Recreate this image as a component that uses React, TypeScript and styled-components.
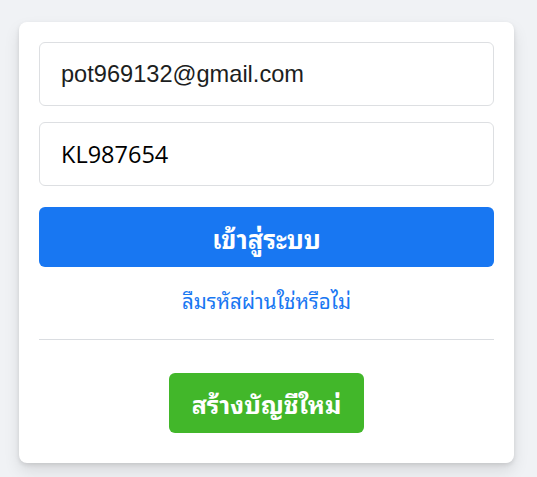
import React from "react";
import styled, { createGlobalStyle } from "styled-components";

const thaiStack =
  '"Leelawadee UI", Leelawadee, Tahoma, "Noto Sans Thai Looped", "Noto Serif Thai", Loma, Garuda, Waree, Sarabun, "Noto Sans", sans-serif';

const Global = createGlobalStyle`
  html, body { margin: 0; padding: 0; background: #f0f2f5; }
  body { font-family: "Liberation Sans", Arial, sans-serif; }
`;

const Page = styled.div`
  padding: 22px 23px 14px 19px;
`;

const Card = styled.form`
  background: #ffffff;
  border-radius: 8px;
  box-shadow: 0 2px 4px rgba(0, 0, 0, 0.1), 0 8px 16px rgba(0, 0, 0, 0.1);
  padding: 20px 20px 30px 20px;
  display: flex;
  flex-direction: column;
`;

const Input = styled.input<{ $font: string; $size: number; $color: string }>`
  box-sizing: border-box;
  height: 64px;
  width: 100%;
  border: 1px solid #dddfe2;
  border-radius: 6px;
  padding: 0 21px;
  font-family: ${(p) => p.$font};
  font-size: ${(p) => p.$size}px;
  color: ${(p) => p.$color};
  outline: none;
  background: #fff;
  & + & { margin-top: 16px; }
`;

const LoginButton = styled.button`
  margin-top: 21px;
  height: 60px;
  padding: 0;
  border: none;
  border-radius: 6px;
  background: #1877f2;
  color: #fff;
  font-family: ${thaiStack};
  font-weight: 700;
  font-size: 25.5px;
  cursor: pointer;
`;

const Forgot = styled.a`
  align-self: center;
  margin-top: 19px;
  color: #1877f2;
  font-family: ${thaiStack};
  font-size: 20.5px;
  line-height: 28px;
  text-decoration: none;
`;

const Divider = styled.div`
  margin-top: 25px;
  border-top: 1px solid #dadde1;
`;

const CreateButton = styled.button`
  align-self: center;
  margin-top: 33px;
  height: 60px;
  padding: 0 23px;
  border: none;
  border-radius: 6px;
  background: #42b72a;
  color: #fff;
  font-family: ${thaiStack};
  font-weight: 700;
  font-size: 25px;
  cursor: pointer;
`;

export default function App() {
  return (
    <>
      <Global />
      <Page>
        <Card onSubmit={(e) => e.preventDefault()}>
          <Input
            $font={'"Liberation Sans", Arial, sans-serif'}
            $size={23.6}
            $color="#1c1e21"
            defaultValue="pot969132@gmail.com"
          />
          <Input
            $font={'"Open Sans", "Noto Sans", sans-serif'}
            $size={23.5}
            $color="#000000"
            defaultValue="KL987654"
          />
          <LoginButton type="submit">เข้าสู่ระบบ</LoginButton>
          <Forgot href="#">ลืมรหัสผ่านใช่หรือไม่</Forgot>
          <Divider />
          <CreateButton type="button">สร้างบัญชีใหม่</CreateButton>
        </Card>
      </Page>
    </>
  );
}
